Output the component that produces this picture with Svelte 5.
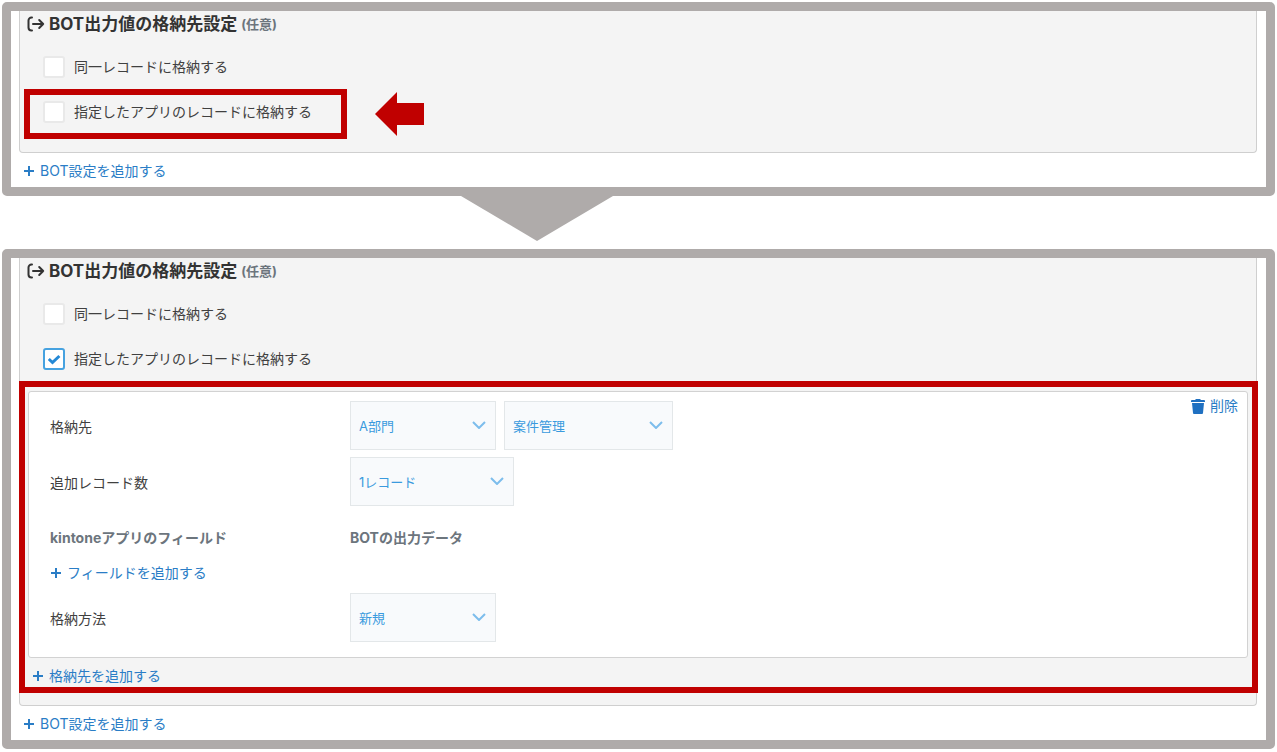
<script>
  let sameTop = $state(false);
  let appTop = $state(false);
  let sameBottom = $state(false);
  let appBottom = $state(true);
</script>

{#snippet plus()}
  <svg class="plus" viewBox="0 0 12 12" aria-hidden="true"><path d="M6 1v10M1 6h10" /></svg>
{/snippet}

{#snippet chevron()}
  <svg class="chevron" viewBox="0 0 14 8" aria-hidden="true"><path d="M1 1l6 6 6-6" /></svg>
{/snippet}

{#snippet heading()}
  <h2>
    <svg class="output" viewBox="0 0 18 16" aria-hidden="true">
      <path d="M5 1.5H4.5a3 3 0 0 0-3 3v7a3 3 0 0 0 3 3H5" />
      <path d="M6 8h10.2M12.2 4l4 4-4 4" />
    </svg>
    <span>BOT出力値の格納先設定</span>
    <small>(任意)</small>
  </h2>
{/snippet}

<main>
  <section class="frame">
    <div class="panel closed">
      {@render heading()}
      <div class="option">
        <label><input type="checkbox" bind:checked={sameTop} />同一レコードに格納する</label>
      </div>
      <div class="option">
        <label><input type="checkbox" bind:checked={appTop} />指定したアプリのレコードに格納する</label>
        <div class="mark mark-option"></div>
        <svg class="pointer" viewBox="0 0 49 44" aria-hidden="true">
          <path d="M0 22 22 0v11h27v22H22v11z" />
        </svg>
      </div>
    </div>
    <div class="footer"><button type="button">{@render plus()}BOT設定を追加する</button></div>
  </section>

  <div class="step">
    <svg viewBox="0 0 152 45" aria-hidden="true"><path d="M0 0h152L76 45z" /></svg>
  </div>

  <section class="frame">
    <div class="panel open">
      {@render heading()}
      <div class="option">
        <label><input type="checkbox" bind:checked={sameBottom} />同一レコードに格納する</label>
      </div>
      <div class="option">
        <label><input type="checkbox" bind:checked={appBottom} />指定したアプリのレコードに格納する</label>
      </div>

      <div class="destinations">
        <div class="card">
          <div class="fields">
            <div class="row">
              <label class="name" for="dest">格納先</label>
              <div class="select w-s">
                <select id="dest"><option>A部門</option></select>{@render chevron()}
              </div>
              <div class="select w-l">
                <select aria-label="アプリ"><option>案件管理</option></select>{@render chevron()}
              </div>
            </div>
            <div class="row">
              <label class="name" for="count">追加レコード数</label>
              <div class="select w-m">
                <select id="count"><option>1レコード</option></select>{@render chevron()}
              </div>
            </div>
            <div class="row titles">
              <span class="name">kintoneアプリのフィールド</span>
              <span>BOTの出力データ</span>
            </div>
            <div class="row add">
              <button type="button">{@render plus()}フィールドを追加する</button>
            </div>
            <div class="row">
              <label class="name" for="method">格納方法</label>
              <div class="select w-s">
                <select id="method"><option>新規</option></select>{@render chevron()}
              </div>
            </div>
          </div>
          <button type="button" class="delete">
            <svg viewBox="0 0 14 15" aria-hidden="true">
              <path d="M5 0h4l1 1h3a1 1 0 0 1 1 1v1H0V2a1 1 0 0 1 1-1h3zM1 4h12l-1 10a1 1 0 0 1-1 1H3a1 1 0 0 1-1-1z" />
            </svg>削除
          </button>
        </div>
        <div class="more"><button type="button">{@render plus()}格納先を追加する</button></div>
        <div class="mark mark-destinations"></div>
      </div>
    </div>
    <div class="footer"><button type="button">{@render plus()}BOT設定を追加する</button></div>
  </section>
</main>

<style>
  :global(body) {
    background: #fff;
  }
  main {
    padding: 2px;
    font: 14px/20px Inter, "Noto Sans CJK JP", sans-serif;
    color: #404040;
  }
  main * {
    box-sizing: border-box;
  }
  .frame {
    border: 9px solid #afabaa;
    border-radius: 5px;
    padding: 0 9px 0 8px;
    background: #fff;
  }
  .panel {
    border: 1px solid #cfcfcf;
    border-top: 0;
    border-radius: 0 0 4px 4px;
    background: #f4f4f4;
  }
  .closed {
    padding-bottom: 18px;
  }
  .open {
    padding-bottom: 11px;
  }
  h2 {
    display: flex;
    align-items: center;
    height: 26px;
    margin: 0 0 7px;
    padding-left: 7px;
    font-size: 17px;
    font-weight: 700;
    color: #333;
  }
  h2 small {
    margin-left: 4px;
    font-size: 13px;
    font-weight: 700;
    color: #6c757d;
  }
  .output {
    width: 18px;
    height: 16px;
    margin-right: 4px;
    fill: none;
    stroke: #333;
    stroke-width: 2;
    stroke-linecap: round;
    stroke-linejoin: round;
  }
  .option {
    position: relative;
    display: flex;
    height: 45px;
    padding-left: 23px;
  }
  .option label {
    display: flex;
    align-items: center;
    gap: 9px;
  }
  input {
    appearance: none;
    width: 22px;
    height: 22px;
    margin: 0;
    border: 2px solid #e9e9e9;
    border-radius: 3px;
    background: #fff center / 14px 12px no-repeat;
  }
  input:checked {
    border-color: #46a2e0;
    background-image: url("data:image/svg+xml,%3Csvg xmlns='http://www.w3.org/2000/svg' viewBox='0 0 14 12'%3E%3Cpath d='M1.8 6l3.7 3.5L12.4 3' fill='none' stroke='%232489d6' stroke-width='3'/%3E%3C/svg%3E");
  }
  .mark {
    position: absolute;
    border: 6px solid #c00000;
    pointer-events: none;
  }
  .mark-option {
    top: 0;
    left: 4px;
    width: 323px;
    height: 50px;
  }
  .mark-destinations {
    inset: 0 -2px 1px -1px;
  }
  .pointer {
    position: absolute;
    top: 3px;
    left: 355px;
    width: 49px;
    height: 44px;
    fill: #c00000;
  }
  button {
    display: inline-flex;
    align-items: center;
    gap: 5px;
    padding: 0;
    border: 0;
    background: none;
    font: inherit;
    color: #2a7dc6;
    cursor: pointer;
  }
  .plus {
    width: 12px;
    height: 12px;
    fill: none;
    stroke: currentColor;
    stroke-width: 2;
  }
  .footer {
    height: 34px;
    padding: 8px 0 0 4px;
    display: flex;
    align-items: flex-start;
  }
  .step {
    display: flex;
    justify-content: center;
    height: 53px;
    padding-right: 204px;
  }
  .step svg {
    width: 152px;
    height: 45px;
    fill: #afabaa;
  }
  .destinations {
    position: relative;
    padding: 10px 8px 0;
  }
  .card {
    display: flex;
    align-items: flex-start;
    border: 1px solid #d2d2d2;
    border-radius: 3px;
    background: #fff;
  }
  .fields {
    flex: 1;
    padding: 9px 0 15px 21px;
  }
  .row {
    display: flex;
    align-items: center;
    gap: 8px;
  }
  .row + .row {
    margin-top: 7px;
  }
  .name {
    width: 292px;
    padding-top: 2px;
  }
  .row.titles {
    align-items: flex-end;
    font-weight: 700;
    color: #6c757d;
  }
  .row + .row.titles {
    margin-top: 20px;
  }
  .row + .row.add {
    margin: 15px 0 10px;
  }
  .select {
    position: relative;
  }
  .w-s {
    width: 146px;
  }
  .w-m {
    width: 164px;
  }
  .w-l {
    width: 169px;
  }
  select {
    appearance: none;
    display: block;
    width: 100%;
    height: 49px;
    padding: 0 36px 0 8px;
    border: 1px solid #e3e7e9;
    border-radius: 0;
    background: #f8fafc;
    font: inherit;
    font-size: 13px;
    color: #3a9ade;
  }
  .chevron {
    position: absolute;
    top: 20px;
    right: 10px;
    width: 14px;
    height: 8px;
    fill: none;
    stroke: #7dbdec;
    stroke-width: 2;
    pointer-events: none;
  }
  .delete {
    padding: 4px 9px 0 0;
  }
  .delete svg {
    width: 14px;
    height: 15px;
    fill: #1f70c1;
  }
  .more {
    display: flex;
    align-items: center;
    height: 36px;
    padding-left: 4px;
  }
</style>
